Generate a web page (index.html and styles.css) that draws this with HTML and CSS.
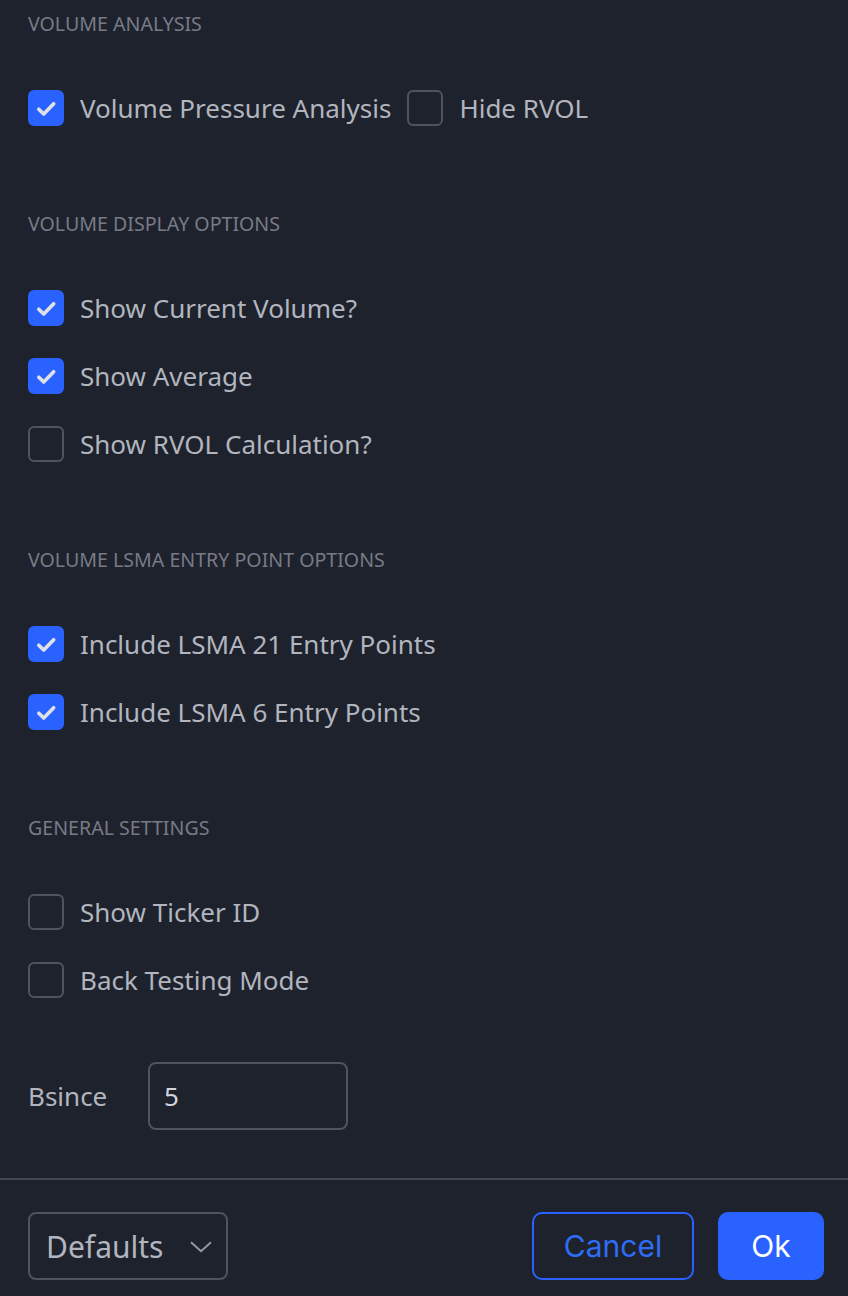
FILE: index.html
```html
<!DOCTYPE html>
<html>
<head>
<meta charset="utf-8">
<link rel="stylesheet" href="styles.css">
</head>
<body>
<div class="panel">
  <div class="content">
    <div class="section">
      <div class="section-title">Volume Analysis</div>
      <div class="row">
        <label class="check"><span class="box on"><svg viewBox="0 0 36 36"><path d="M10.8 19.2l4.9 4.9 10-10.4" /></svg></span><span class="lbl">Volume Pressure Analysis</span></label>
        <label class="check"><span class="box"></span><span class="lbl">Hide RVOL</span></label>
      </div>
    </div>
    <div class="section">
      <div class="section-title">Volume Display Options</div>
      <div class="row"><label class="check"><span class="box on"><svg viewBox="0 0 36 36"><path d="M10.8 19.2l4.9 4.9 10-10.4" /></svg></span><span class="lbl">Show Current Volume?</span></label></div>
      <div class="row"><label class="check"><span class="box on"><svg viewBox="0 0 36 36"><path d="M10.8 19.2l4.9 4.9 10-10.4" /></svg></span><span class="lbl">Show Average</span></label></div>
      <div class="row"><label class="check"><span class="box"></span><span class="lbl">Show RVOL Calculation?</span></label></div>
    </div>
    <div class="section">
      <div class="section-title">Volume LSMA Entry Point Options</div>
      <div class="row"><label class="check"><span class="box on"><svg viewBox="0 0 36 36"><path d="M10.8 19.2l4.9 4.9 10-10.4" /></svg></span><span class="lbl">Include LSMA 21 Entry Points</span></label></div>
      <div class="row"><label class="check"><span class="box on"><svg viewBox="0 0 36 36"><path d="M10.8 19.2l4.9 4.9 10-10.4" /></svg></span><span class="lbl">Include LSMA 6 Entry Points</span></label></div>
    </div>
    <div class="section">
      <div class="section-title">General Settings</div>
      <div class="row"><label class="check"><span class="box"></span><span class="lbl">Show Ticker ID</span></label></div>
      <div class="row"><label class="check"><span class="box"></span><span class="lbl">Back Testing Mode</span></label></div>
    </div>
    <div class="input-row">
      <span class="input-label">Bsince</span>
      <div class="input">5</div>
    </div>
  </div>
  <div class="footer">
    <div class="select"><span>Defaults</span><svg viewBox="0 0 22 12"><path d="M1 1.2l10 9 10-9" /></svg></div>
    <div class="buttons">
      <button class="btn btn-outline">Cancel</button>
      <button class="btn btn-primary">Ok</button>
    </div>
  </div>
</div>
</body>
</html>
```

FILE: styles.css
```css
html, body {
  margin: 0;
  padding: 0;
  background: #1e222d;
}
body {
  width: 848px;
  height: 1296px;
  overflow: hidden;
  font-family: "Noto Sans", "DejaVu Sans", sans-serif;
  color: #b2b5be;
}
.panel {
  display: flex;
  flex-direction: column;
  height: 1296px;
}
.content {
  padding: 0 28px;
  display: flex;
  flex-direction: column;
  gap: 58px;
}
.section {
  display: flex;
  flex-direction: column;
}
.section-title {
  height: 48px;
  line-height: 48px;
  font-size: 19.6px;
  text-transform: uppercase;
  color: #787b86;
  margin-bottom: 26px;
}
.row {
  height: 68px;
  display: flex;
  align-items: center;
  gap: 16px;
}
.check {
  display: flex;
  align-items: center;
  gap: 16px;
}
.box {
  width: 36px;
  height: 36px;
  box-sizing: border-box;
  border: 2px solid #50535e;
  border-radius: 6px;
  flex: none;
}
.box.on {
  background: #2962ff;
  border-color: #2962ff;
}
.box svg {
  display: block;
  width: 36px;
  height: 36px;
  margin: -2px;
}
.box svg path {
  fill: none;
  stroke: #dfe1e6;
  stroke-width: 3.6;
  stroke-linecap: round;
  stroke-linejoin: round;
}
.lbl {
  font-size: 26px;
  line-height: 36px;
}
.input-row {
  display: flex;
  align-items: center;
  height: 68px;
  margin-top: -10px;
}
.input-label {
  font-size: 26px;
  width: 120px;
}
.input {
  width: 200px;
  height: 68px;
  box-sizing: border-box;
  border: 2px solid #50535e;
  border-radius: 8px;
  font-size: 26px;
  line-height: 64px;
  padding: 0 14px;
  color: #d1d4dc;
}
.footer {
  margin-top: 48px;
  border-top: 2px solid #434651;
  padding: 32px 24px 0 28px;
  display: flex;
  justify-content: space-between;
  align-items: center;
}
.select {
  width: 200px;
  height: 68px;
  box-sizing: border-box;
  border: 2px solid #50535e;
  border-radius: 8px;
  display: flex;
  align-items: center;
  justify-content: space-between;
  padding: 0 14px 0 16px;
  font-size: 30px;
  color: #b2b5be;
}
.select svg {
  width: 22px;
  height: 12px;
  margin-top: 2px;
}
.select svg path {
  fill: none;
  stroke: #9598a1;
  stroke-width: 2;
}
.buttons {
  display: flex;
  gap: 24px;
}
.btn {
  height: 68px;
  border-radius: 10px;
  font-family: Inter, Roboto, sans-serif;
  font-size: 30px;
  box-sizing: border-box;
  padding: 0;
}
.btn-outline {
  width: 162px;
  background: transparent;
  border: 2px solid #2962ff;
  color: #2e6df5;
}
.btn-primary {
  width: 106px;
  background: #2962ff;
  border: 2px solid #2962ff;
  color: #ffffff;
}
```
